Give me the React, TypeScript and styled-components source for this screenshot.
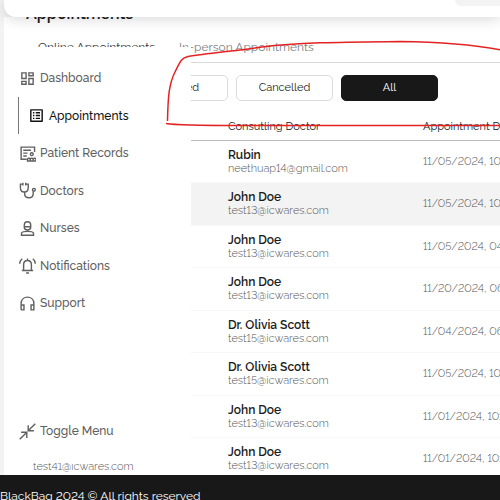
import React from "react";
import styled, { createGlobalStyle } from "styled-components";
import { MdOutlineDashboard, MdOutlineListAlt } from "react-icons/md";

const Global = createGlobalStyle`
  * { box-sizing: border-box; }
  body {
    margin: 0;
    background: #f3f3f3;
    font-family: Raleway, Lato, "Open Sans", sans-serif;
    font-variant-numeric: lining-nums;
    color: #1a1a1a;
  }
  button { font: inherit; color: inherit; cursor: pointer; }
`;

const Page = styled.div`
  position: relative;
  height: 100vh;
  overflow: hidden;
  display: flex;
  flex-direction: column;
`;

const TopBar = styled.header`
  position: relative;
  z-index: 3;
  flex: none;
  display: flex;
  justify-content: flex-end;
  height: 17px;
  margin-left: 4px;
  background: #fff;
  border-bottom-left-radius: 12px;
  box-shadow: 0 2px 14px rgba(0, 0, 0, 0.16);
`;

const SearchBox = styled.input`
  width: 45px;
  height: 6px;
  padding: 0;
  border: 0;
  border-bottom-left-radius: 6px;
  background: #f3f3f3;
`;

const Content = styled.main`
  flex: 1;
  min-height: 0;
  overflow: hidden;
  margin-left: 4px;
  padding-left: 17px;
  background: #fff;
`;

const Title = styled.h1`
  margin: -14px 0 0 5px;
  font-size: 16px;
  line-height: 22px;
  font-weight: 600;
`;

const Tabs = styled.nav`
  display: flex;
  gap: 24px;
  height: 38px;
  padding: 13px 0 0 17px;
  border-bottom: 1px solid #d9d9d9;
`;

const Tab = styled.button<{ $active?: boolean }>`
  padding: 0;
  border: 0;
  background: none;
  font-size: 12px;
  line-height: 18px;
  align-self: flex-start;
  white-space: nowrap;
  color: ${(p) => (p.$active ? "#333" : "#808080")};
`;

const Filters = styled.div`
  display: flex;
  gap: 8px;
  padding: 12px 0 12px 110px;
`;

const Filter = styled.button<{ $active?: boolean }>`
  flex: none;
  width: 97px;
  height: 26px;
  padding: 0;
  border: 1px solid ${(p) => (p.$active ? "#181818" : "#dcdcdc")};
  border-radius: 5px;
  background: ${(p) => (p.$active ? "#181818" : "#fff")};
  color: ${(p) => (p.$active ? "#fff" : "#222")};
  font-size: 11px;
  line-height: 16px;
  font-weight: 400;
`;

const Table = styled.table`
  width: 100%;
  min-width: 780px;
  table-layout: fixed;
  border-collapse: collapse;
`;

const HeadCell = styled.th`
  height: 27px;
  padding: 2px 12px 0;
  border-bottom: 1px solid #bcbcbc;
  text-align: left;
  font-size: 11px;
  line-height: 16px;
  font-weight: 400;
  color: #222;
`;

const Row = styled.tr<{ $hover?: boolean }>`
  height: 42px;
  background: ${(p) => (p.$hover ? "#f3f3f3" : "#fff")};
  border-bottom: 1px solid #f6f6f6;
  &:nth-child(even) { height: 43px; }
`;

const Cell = styled.td`
  padding: 1px 12px 0;
  font-size: 11px;
  line-height: 14px;
  font-weight: 300;
  color: #555;
  white-space: nowrap;
`;

const PatientCell = styled(Cell)`
  vertical-align: bottom;
  padding-bottom: 6px;
`;

const Name = styled.div`
  color: #1a1a1a;
  font-size: 12px;
  font-weight: 600;
`;

const Sidebar = styled.aside`
  position: absolute;
  z-index: 2;
  top: 47px;
  bottom: 37px;
  left: 4px;
  width: 187px;
  padding: 12px 14px;
  display: flex;
  flex-direction: column;
  justify-content: space-between;
  background: #fff;
`;

const Menu = styled.nav`
  display: flex;
  flex-direction: column;
`;

const Item = styled.a<{ $active?: boolean }>`
  display: flex;
  align-items: center;
  gap: 4px;
  height: 38px;
  padding: 0 0 0 ${(p) => (p.$active ? "9px" : "1px")};
  border: 0;
  border-left: ${(p) => (p.$active ? "1px solid #777" : "0")};
  background: none;
  color: ${(p) => (p.$active ? "#111" : "#606060")};
  font-size: 12px;
  line-height: 18px;
  font-weight: 500;
  text-decoration: none;
  white-space: nowrap;
  &:nth-child(even) { height: 37px; }
  svg { flex: none; width: 17px; height: 17px; }
`;

const ToggleButton = styled(Item)`
  &:nth-child(even) { height: 40px; }
`;

const Footer = styled.footer`
  position: relative;
  z-index: 3;
  flex: none;
  height: 25px;
  padding-top: 12px;
  overflow: hidden;
  background: #181818;
  color: #fff;
  font-size: 12px;
  line-height: 18px;
  white-space: nowrap;
`;

const Markup = styled.svg`
  position: absolute;
  z-index: 4;
  top: 0;
  left: 0;
  width: 500px;
  height: 140px;
  pointer-events: none;
`;

const Line = ({ children }: { children: React.ReactNode }) => (
  <svg viewBox="0 0 24 24" fill="none" stroke="currentColor" strokeWidth="2" aria-hidden="true">{children}</svg>
);

const RecordsIcon = () => (
  <Line>
    <path d="M11 20H3V3h19v7M6 7.500h11M6 11.500h6M6 15.500h5" />
    <circle cx="18" cy="13" r="2" />
    <path d="M12 22.500v-2c0-2 3-2.500 4-.5 1-2 3-2 4 0 1-2 4-1.500 4 .5v2zM16 22v-2M20 22v-2" />
  </Line>
);
const DoctorIcon = () => (
  <Line>
    <path d="M5 3H2v5c0 8 11 8 11 0V3h-3M5.500 1v4M9.500 1v4M8 14v3c0 7 12 7 12 0v-4" />
    <circle cx="21" cy="11" r="2" />
  </Line>
);
const NurseIcon = () => (
  <Line>
    <path d="M7.500 11V7c0-6 9-6 9 0v4c-1 4-8 4-9 0zM7.500 9.500h9M3.500 21.500v-3c1-2 4-2.500 8.500-2.500s7.500.5 8.500 2.500v3z" />
  </Line>
);
const BellIcon = () => (
  <Line>
    <path d="M4 19h16M6.500 19v-8c0-8 11-8 11 0v8M12 5V2M1 9.500c0-3 1-5 3.500-7M23 9.500c0-3-1-5-3.500-7M10 22.500h4" />
  </Line>
);
const HeadsetIcon = () => (
  <Line>
    <path d="M3 21V12C3 0 21 0 21 12v9h-4v-7h4M3 14h4v7H3" />
  </Line>
);
const CollapseIcon = () => (
  <Line>
    <path d="M23 1l-9 9M13 3v8h8M1 23l9-9M3 13h8v8" />
  </Line>
);

const menu = [
  { label: "Dashboard", icon: <MdOutlineDashboard /> },
  { label: "Appointments", icon: <MdOutlineListAlt />, active: true },
  { label: "Patient Records", icon: <RecordsIcon /> },
  { label: "Doctors", icon: <DoctorIcon /> },
  { label: "Nurses", icon: <NurseIcon /> },
  { label: "Notifications", icon: <BellIcon /> },
  { label: "Support", icon: <HeadsetIcon /> },
];

type Visit = { doctor: string; email: string; date: string; patient?: string };

const visits: Visit[] = [
  { doctor: "Rubin", email: "neethuap14@gmail.com", date: "11/05/2024, 10:30" },
  { doctor: "John Doe", email: "test13@icwares.com", date: "11/05/2024, 10:30" },
  { doctor: "John Doe", email: "test13@icwares.com", date: "11/05/2024, 04:30" },
  { doctor: "John Doe", email: "test13@icwares.com", date: "11/20/2024, 06:30" },
  { doctor: "Dr. Olivia Scott", email: "test15@icwares.com", date: "11/04/2024, 06:30" },
  { doctor: "Dr. Olivia Scott", email: "test15@icwares.com", date: "11/05/2024, 10:30" },
  { doctor: "John Doe", email: "test13@icwares.com", date: "11/01/2024, 10:30" },
  { doctor: "John Doe", email: "test13@icwares.com", date: "11/01/2024, 10:30", patient: "test41@icwares.com" },
];

export default function App() {
  return (
    <Page>
      <Global />
      <TopBar><SearchBox aria-label="Search" /></TopBar>
      <Content>
        <Title>Appointments</Title>
        <Tabs>
          <Tab $active>Online Appointments</Tab>
          <Tab>In-person Appointments</Tab>
        </Tabs>
        <Filters>
          <Filter>Booked</Filter>
          <Filter>Cancelled</Filter>
          <Filter $active>All</Filter>
        </Filters>
        <Table>
          <thead>
            <tr>
              <HeadCell />
              <HeadCell>Consutling Doctor</HeadCell>
              <HeadCell>Appointment Date</HeadCell>
              <HeadCell />
            </tr>
          </thead>
          <tbody>
            {visits.map((v, i) => (
              <Row key={i} $hover={i === 1}>
                <PatientCell>{v.patient}</PatientCell>
                <Cell><Name>{v.doctor}</Name>{v.email}</Cell>
                <Cell>{v.date}</Cell>
                <Cell />
              </Row>
            ))}
          </tbody>
        </Table>
      </Content>
      <Sidebar>
        <Menu>
          {menu.map((m) => (
            <Item key={m.label} href="#" $active={m.active}>{m.icon}{m.label}</Item>
          ))}
        </Menu>
        <ToggleButton as="button" type="button"><CollapseIcon />Toggle Menu</ToggleButton>
      </Sidebar>
      <Footer>BlackBag 2024 © All rights reserved</Footer>
      <Markup viewBox="0 0 500 140" fill="none" stroke="#e32222" strokeWidth="1.5" aria-hidden="true">
        <path d="M167.500 121C168 96 169 84 175 72C180 62 181 58 188 56.500C208 53 236 51 262 47C300 42 350 42 400 41.500C440 42 470 44 501 50" />
        <path d="M166 123.500C178 125.500 200 125.500 240 125.500H501" />
      </Markup>
    </Page>
  );
}
